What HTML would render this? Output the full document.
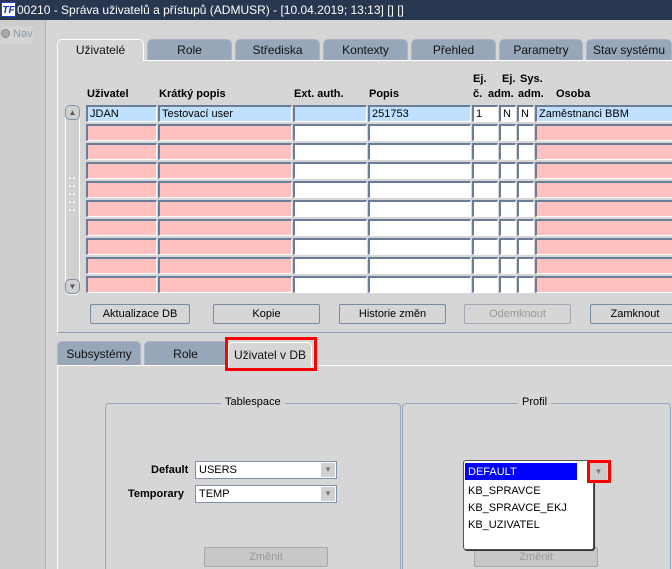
<!DOCTYPE html>
<html><head><meta charset="utf-8"><style>
*{box-sizing:border-box;margin:0;padding:0}
html,body{width:672px;height:569px;overflow:hidden}
body{background:#d6d6d6;font-family:"Liberation Sans",Arial,sans-serif;font-size:11px;color:#000;position:relative}
.a{position:absolute}
.title{left:0;top:0;width:672px;height:20px;background:#29364f;color:#fff;font-size:12px;line-height:20px;padding-left:17px}
.logo{left:1px;top:2px;width:15px;height:15px;background:#fff;color:#1030c0;font-weight:bold;font-style:italic;font-size:10px;line-height:15px;text-align:center;border:1px solid #2040d0}
.left{left:0;top:20px;width:46px;height:549px;background:#cdcdcd;border-right:1px solid #a8b0c0}
.tab{height:21px;background:#98a6b9;border:1px solid #aab4c4;border-bottom:none;border-radius:5px 5px 0 0;text-align:center;line-height:21px;font-size:12px;color:#111}
.tab.sel{background:#d6d6d6;border-color:#fff;border-bottom:none}
.panel{border:1px solid #fff;border-right:none;border-bottom:1px solid #8c9ab0}
.c{height:17px;border:1px solid #fff;border-top:2px solid #6a7c98;border-left:2px solid #6a7c98;background:#fff;font-size:11px;line-height:15px;padding-left:2px}
.p{background:#ffc0c0}
.b{background:#c0e0ff}
.h{font-weight:bold;font-size:11px}
.btn{height:20px;border:1px solid #7a8aa0;border-radius:2px;background:#d6d6d6;text-align:center;line-height:18px;font-size:11px}
.dis{color:#999;border-color:#a0a8b4}
.frame{border:1px solid #98a6b9;border-radius:4px;border-bottom:none}
.lg{background:#d6d6d6;padding:0 4px;font-size:11px}
.sel2{height:18px;border:1px solid #8090a8;background:#fff;font-size:11px;line-height:17px;padding-left:3px}
.arr{right:1px;top:1px;width:14px;height:14px;background:#d0d0d0;color:#777;font-size:8px;text-align:center;line-height:14px}
</style></head><body>
<div class="a title">00210 - Správa uživatelů a přístupů (ADMUSR) - [10.04.2019; 13:13] [] []</div>
<div class="a logo">TF</div>
<div class="a left"></div>
<div class="a" style="left:1px;top:26px;width:32px;height:18px;background:#d4d4d4;color:#8899aa;font-size:11px;line-height:17px"><span style="display:inline-block;width:9px;height:9px;border-radius:50%;background:#aaa;border:1px solid #888;vertical-align:-1px"></span> Nav</div>

<div class="a tab sel" style="left:57px;top:39px;width:87px;height:22px;z-index:2">Uživatelé</div>
<div class="a tab" style="left:147px;top:39px;width:85px">Role</div>
<div class="a tab" style="left:235px;top:39px;width:85px">Střediska</div>
<div class="a tab" style="left:323px;top:39px;width:85px">Kontexty</div>
<div class="a tab" style="left:411px;top:39px;width:85px">Přehled</div>
<div class="a tab" style="left:499px;top:39px;width:84px">Parametry</div>
<div class="a tab" style="left:586px;top:39px;width:86px">Stav systému</div>
<div class="a panel" style="left:57px;top:60px;width:620px;height:273px"></div>

<div class="a h" style="left:87px;top:88px">Uživatel</div>
<div class="a h" style="left:159px;top:88px">Krátký popis</div>
<div class="a h" style="left:294px;top:88px">Ext. auth.</div>
<div class="a h" style="left:369px;top:88px">Popis</div>
<div class="a h" style="left:473px;top:73px">Ej.</div>
<div class="a h" style="left:473px;top:88px">č.</div>
<div class="a h" style="left:502px;top:73px">Ej.</div>
<div class="a h" style="left:488px;top:88px">adm.</div>
<div class="a h" style="left:520px;top:73px">Sys.</div>
<div class="a h" style="left:518px;top:88px">adm.</div>
<div class="a h" style="left:556px;top:88px">Osoba</div>

<div class="a" style="left:65px;top:105px;width:15px;height:190px;border:1px solid #fff;border-radius:5px;background:#d0d0d0"></div>
<div class="a" style="left:65px;top:105px;width:15px;height:15px;border:1px solid #8090a8;border-radius:5px;font-size:8px;text-align:center;line-height:13px;color:#556">▲</div>
<div class="a" style="left:65px;top:279px;width:15px;height:15px;border:1px solid #8090a8;border-radius:5px;font-size:8px;text-align:center;line-height:13px;color:#556">▼</div>
<div class="a" style="left:68px;top:174px;width:8px;height:42px;background:radial-gradient(circle,#fff 0.8px,transparent 1.2px) 0 0/4px 8px"></div>

<div id="g"></div>

<div class="a btn" style="left:90px;top:304px;width:100px">Aktualizace DB</div>
<div class="a btn" style="left:213px;top:304px;width:107px">Kopie</div>
<div class="a btn" style="left:339px;top:304px;width:107px">Historie změn</div>
<div class="a btn dis" style="left:464px;top:304px;width:107px">Odemknout</div>
<div class="a btn" style="left:590px;top:304px;width:90px">Zamknout</div>

<div class="a tab" style="left:57px;top:341px;width:84px;height:24px;line-height:24px">Subsystémy</div>
<div class="a tab" style="left:144px;top:341px;width:83px;height:24px;line-height:24px">Role</div>
<div class="a tab sel" style="left:228px;top:342px;width:84px;height:25px;line-height:24px;z-index:2">Uživatel v DB</div>
<div class="a" style="left:225px;top:337px;width:92px;height:34px;border:3px solid #f00;z-index:3"></div>
<div class="a panel" style="left:57px;top:365px;width:620px;height:220px"></div>

<div class="a frame" style="left:105px;top:403px;width:296px;height:170px"></div>
<div class="a lg" style="left:221px;top:396px">Tablespace</div>
<div class="a frame" style="left:402px;top:403px;width:269px;height:170px"></div>
<div class="a lg" style="left:518px;top:396px">Profil</div>

<div class="a h" style="left:151px;top:464px">Default</div>
<div class="a h" style="left:128px;top:488px">Temporary</div>
<div class="a sel2" style="left:195px;top:461px;width:142px">USERS<div class="a arr">▼</div></div>
<div class="a sel2" style="left:195px;top:485px;width:142px">TEMP<div class="a arr">▼</div></div>
<div class="a btn dis" style="left:204px;top:547px;width:124px;background:#c8c8c8;color:#999">Změnit</div>
<div class="a btn dis" style="left:474px;top:547px;width:124px;background:#c8c8c8;color:#999">Změnit</div>

<div class="a" style="left:463px;top:460px;width:131px;height:90px;background:#fff;border:1px solid #555;border-radius:3px;box-shadow:1px 1px 0 #333"></div>
<div class="a" style="left:465px;top:463px;width:112px;height:17px;background:#0000ff;color:#fff;font-size:11px;line-height:18px;padding-left:3px">DEFAULT</div>
<div class="a" style="left:590px;top:463px;width:17px;height:17px;background:#ccc;color:#777;font-size:8px;text-align:center;line-height:17px">▼</div>
<div class="a" style="left:587px;top:460px;width:24px;height:23px;border:3px solid #f00"></div>
<div class="a" style="left:468px;top:485px;font-size:11px">KB_SPRAVCE</div>
<div class="a" style="left:468px;top:502px;font-size:11px">KB_SPRAVCE_EKJ</div>
<div class="a" style="left:468px;top:519px;font-size:11px">KB_UZIVATEL</div>

<script>
var cols=[[86,71,'p'],[158,134,'p'],[293,74,''],[368,103,''],[472,26,''],[499,17,''],[517,17,''],[535,140,'p']];
var first=['JDAN','Testovací user','','251753','1','N','N','Zaměstnanci BBM'];
var h='';
for(var r=0;r<10;r++){var y=105+r*19;
for(var i=0;i<cols.length;i++){var c=cols[i];var cls=c[2];if(r==0)cls=(i==4||i==5||i==6)?'':'b';
h+='<div class="a c '+cls+'" style="left:'+c[0]+'px;top:'+y+'px;width:'+c[1]+'px">'+(r==0?first[i]:'')+'</div>';}}
document.getElementById('g').innerHTML=h;
</script>
</body></html>
